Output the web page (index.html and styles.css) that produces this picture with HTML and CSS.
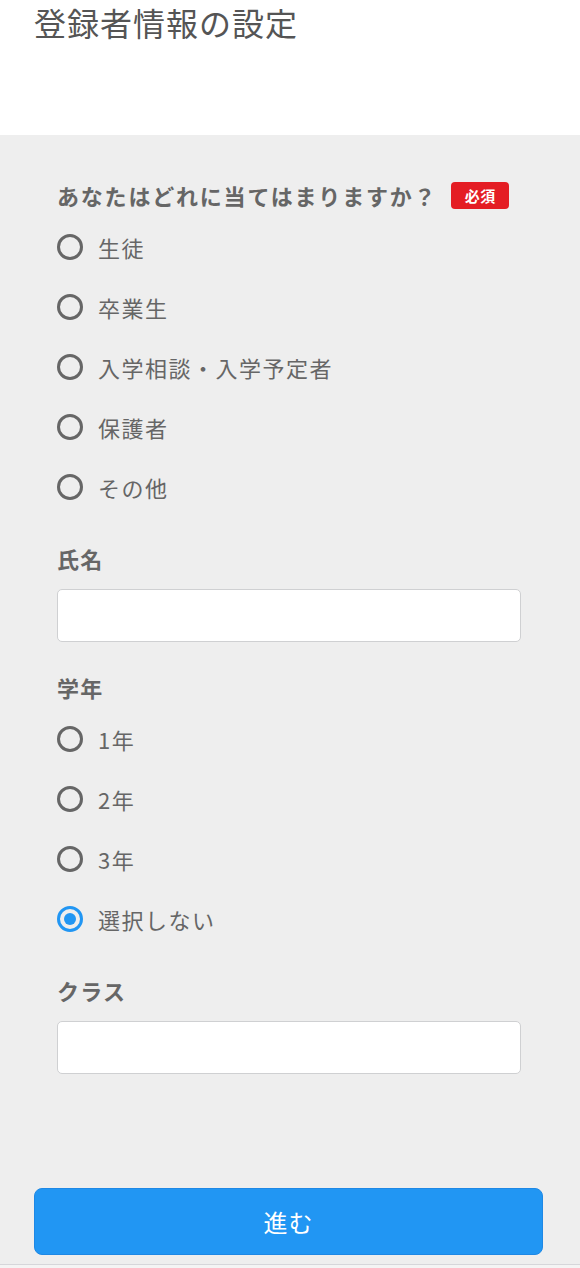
FILE: index.html
```html
<!DOCTYPE html>
<html lang="ja">
<head>
<meta charset="utf-8">
<title>登録者情報の設定</title>
<link rel="stylesheet" href="styles.css">
</head>
<body>
<header class="header">
  <h1 class="title">登録者情報の設定</h1>
</header>
<main class="form">
  <div class="field field-radio">
    <div class="label label-question">あなたはどれに当てはまりますか？<span class="badge">必須</span></div>
    <div class="radios">
      <label class="radio"><span class="dot"></span><span class="text">生徒</span></label>
      <label class="radio"><span class="dot"></span><span class="text">卒業生</span></label>
      <label class="radio"><span class="dot"></span><span class="text">入学相談・入学予定者</span></label>
      <label class="radio"><span class="dot"></span><span class="text">保護者</span></label>
      <label class="radio"><span class="dot"></span><span class="text">その他</span></label>
    </div>
  </div>
  <div class="field field-text">
    <div class="label label-input">氏名</div>
    <div class="input"></div>
  </div>
  <div class="field field-radio">
    <div class="label">学年</div>
    <div class="radios">
      <label class="radio"><span class="dot"></span><span class="text">1年</span></label>
      <label class="radio"><span class="dot"></span><span class="text">2年</span></label>
      <label class="radio"><span class="dot"></span><span class="text">3年</span></label>
      <label class="radio checked"><span class="dot"></span><span class="text">選択しない</span></label>
    </div>
  </div>
  <div class="field field-text">
    <div class="label label-input">クラス</div>
    <div class="input"></div>
  </div>
  <div class="actions">
    <button class="button">進む</button>
  </div>
</main>
<footer class="footer"></footer>
</body>
</html>
```
FILE: styles.css
```css
html, body {
  margin: 0;
  padding: 0;
}
body {
  font-family: "Noto Sans CJK JP", "Noto Sans", sans-serif;
  color: #666;
  background: #eeeeee;
}
.header {
  background: #fff;
  height: 135px;
}
.title {
  margin: 0;
  padding-left: 34px;
  font-size: 32px;
  font-weight: 400;
  line-height: 44px;
  color: #555;
  letter-spacing: 1px;
}
.form {
  padding: 45px 60px 0 57px;
}
.field-radio {
  margin-bottom: 26px;
}
.field-text {
  margin-bottom: 30px;
}
.label {
  display: flex;
  align-items: center;
  height: 30px;
  font-size: 22px;
  font-weight: 700;
  letter-spacing: 1.2px;
  color: #666;
}
.label-question {
  letter-spacing: 1.8px;
}
.badge {
  margin-left: 14px;
  background: #e41d24;
  color: #fff;
  font-size: 15px;
  font-weight: 700;
  height: 27px;
  width: 58px;
  border-radius: 4px;
  display: flex;
  align-items: center;
  justify-content: center;
  letter-spacing: 0.5px;
}
.radios {
  margin-top: 7px;
  display: flex;
  flex-direction: column;
}
.radio {
  height: 60px;
  display: flex;
  align-items: center;
}
.dot {
  box-sizing: border-box;
  width: 26px;
  height: 26px;
  border: 3px solid #666;
  border-radius: 50%;
  display: flex;
  align-items: center;
  justify-content: center;
  margin-right: 15px;
}
.radio.checked .dot {
  border-color: #2196f3;
}
.radio.checked .dot::after {
  content: "";
  width: 12px;
  height: 12px;
  border-radius: 50%;
  background: #2196f3;
}
.text {
  font-size: 22px;
  letter-spacing: 1.5px;
  color: #666;
}
.label-input {
  margin-bottom: 16px;
}
.input {
  box-sizing: border-box;
  width: 464px;
  height: 53px;
  background: #fff;
  border: 1px solid #cfd0d2;
  border-radius: 5px;
}
.actions {
  padding-top: 84px;
  margin-left: -23px;
}
.button {
  display: block;
  width: 509px;
  height: 67px;
  border: 1px solid #1e88e5;
  border-radius: 8px;
  background: #2196f3;
  color: #fff;
  font-family: "Noto Sans CJK JP", "Noto Sans", sans-serif;
  font-size: 24px;
  letter-spacing: 1px;
  padding: 0;
}
.footer {
  margin-top: 9px;
  border-top: 1px solid #d6d6da;
  height: 20px;
  background: #f4f4f4;
}
```
